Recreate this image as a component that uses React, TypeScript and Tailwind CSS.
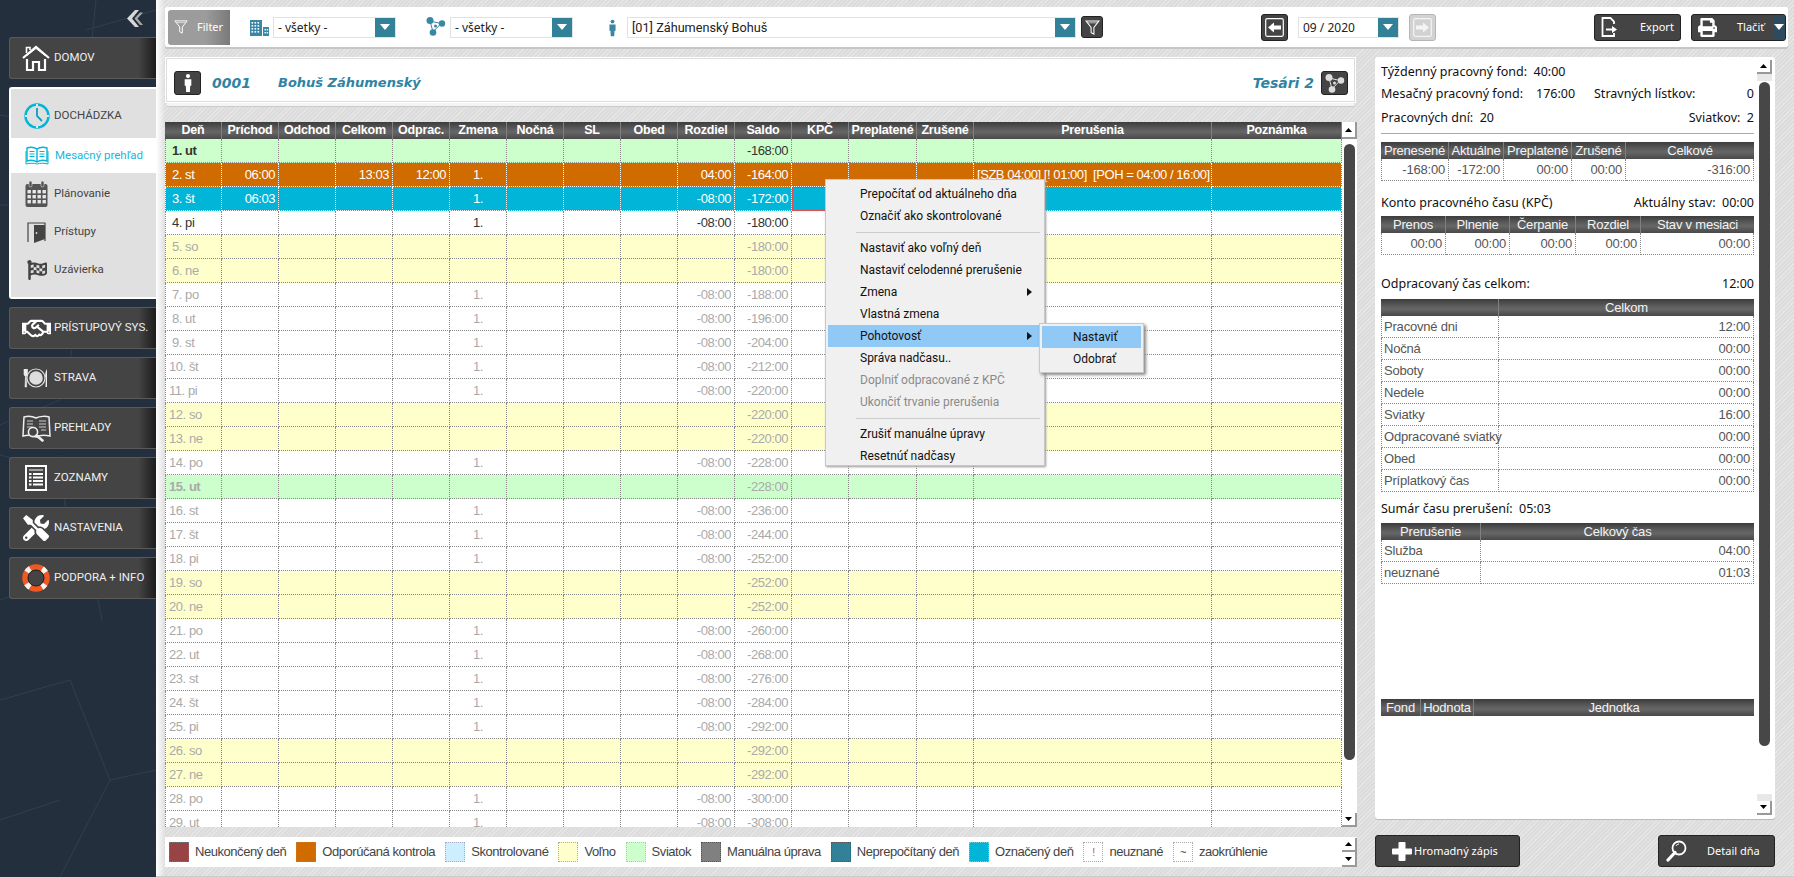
import React from "react";
import { FaRegHandshake, FaTools, FaFlagCheckered, FaPrint } from "react-icons/fa";

const ui = "font-['Noto_Sans',sans-serif]";
const rb = "font-['Roboto',sans-serif]";
const ar = "font-['Liberation_Sans',Arial,sans-serif]";
const headBg = "bg-[linear-gradient(#3c3c3c,#5f5f5f_45%,#666_60%,#484848)]";
const hatch = "bg-[repeating-linear-gradient(135deg,#e6e6e6_0px,#e6e6e6_1px,#dcdcdc_1px,#dcdcdc_3px)]";
const darkBtn = "bg-[#444] border border-[#222] rounded-[3px]";

/* ---------- icons ---------- */
const HomeIcon = () => (
  <svg width="28" height="28" viewBox="0 0 28 28" fill="none" stroke="#fff" strokeWidth="2.2">
    <path d="M1 14 14 3l13 11" />
    <path d="M4.5 9V3.5H8V6" strokeWidth="1.6" />
    <path d="M5 15v11h6v-8h6v8h6V15" />
    <path d="M5 11.5 14 4.5l9 7" strokeWidth="1" />
  </svg>
);
const ClockIcon = () => (
  <svg width="26" height="26" viewBox="0 0 26 26" fill="none" stroke="#00b5d8">
    <circle cx="13" cy="13" r="11.5" strokeWidth="2.4" />
    <path d="M13 5v8l5 5" strokeWidth="1.8" stroke="#0a9fc0" />
    <path d="M13 1v2M13 23v2M1 13h2M23 13h2" strokeWidth="1.6" stroke="#fff" />
  </svg>
);
const BookIcon = () => (
  <svg width="24" height="19" viewBox="0 0 24 19" fill="none" stroke="#00b5d8" strokeWidth="1.4">
    <path d="M12 3C9 1 5 1 2 2v13c3-1 7-1 10 1 3-2 7-2 10-1V2c-3-1-7-1-10 1zM12 3v13" />
    <path d="M1 5v13c4-1 8-1 11 0 3-1 7-1 11 0V5" strokeWidth="1" />
    <path d="M4.5 5.5h5M4.5 8h5M4.5 10.5h5M14.5 5.5h5M14.5 8h5M14.5 10.5h5" strokeWidth="1" />
  </svg>
);
const CalendarIcon = () => (
  <svg width="23" height="26" viewBox="0 0 23 26">
    <rect x="0.5" y="3" width="22" height="23" rx="2" fill="#555" />
    <rect x="4" y="0" width="3" height="6" rx="1.5" fill="#555" stroke="#e0e0e0" strokeWidth=".6" />
    <rect x="16" y="0" width="3" height="6" rx="1.5" fill="#555" stroke="#e0e0e0" strokeWidth=".6" />
    <g fill="#e8e8e8">
      {[9, 14, 19].map((y) => [2.5, 7.5, 12.5, 17.5].map((x) => <rect key={x + "-" + y} x={x} y={y} width="3.4" height="3.4" />))}
    </g>
  </svg>
);
const DoorIcon = () => (
  <svg width="19" height="21" viewBox="0 0 19 21">
    <path d="M1 20V1h17v18" fill="none" stroke="#444" strokeWidth="1.2" />
    <path d="M7 3h11v14L7 21z" fill="#444" />
    <circle cx="9.5" cy="11" r=".9" fill="#e0e0e0" />
  </svg>
);
const PlateIcon = () => (
  <svg width="26" height="20" viewBox="0 0 26 20">
    <circle cx="13" cy="10" r="9" fill="none" stroke="#ddd" strokeWidth="1.2" />
    <circle cx="13" cy="10" r="6.8" fill="#ddd" />
    <path d="M1 1v5c0 1.6 1 2 1.5 2.5L2 19h1.6l-.4-10.500C4 8 4.500 7 4.500 6V1M2.700 1v5" fill="#eee" stroke="#eee" strokeWidth=".6" />
    <path d="M24 1c-1.500 2-2 5-1.800 8l.6.4L22.500 19H24z" fill="#eee" />
  </svg>
);
const ReportIcon = () => (
  <svg width="29" height="27" viewBox="0 0 29 27">
    <path d="M14 3C10 1 5 1 2 2L1 21c4-1 9-1 13 1 4-2 9-2 14-1l-1-19c-3-1-9-1-13 1z" fill="none" stroke="#eee" strokeWidth="1.5" />
    <path d="M5 6h6M5 9h6M5 12h5M17 6h7M17 9h7M17 12h7M19 15h5" stroke="#ccc" strokeWidth="1.2" />
    <circle cx="11" cy="17" r="4.600" fill="#444" stroke="#eee" strokeWidth="1.6" />
    <path d="m14.500 20.500 6 5" stroke="#eee" strokeWidth="2.600" strokeLinecap="round" />
  </svg>
);
const ListIcon = () => (
  <svg width="22" height="26" viewBox="0 0 22 26">
    <rect width="22" height="26" fill="#fff" />
    <rect x="2" y="2" width="18" height="22" fill="#444" />
    <path d="M4 5h14" stroke="#fff" strokeWidth="1" />
    <g fill="#fff">
      {[8, 11.500, 15, 18.500].map((y) => (
        <React.Fragment key={y}>
          <rect x="4" y={y} width="2.500" height="2" />
          <rect x="8" y={y} width="10" height="2" />
        </React.Fragment>
      ))}
    </g>
  </svg>
);
const RingIcon = () => (
  <svg width="28" height="28" viewBox="0 0 28 28" fill="none">
    <circle cx="14" cy="14" r="11" stroke="#f05a22" strokeWidth="5.500" />
    <circle cx="14" cy="14" r="11" stroke="#f4f4f4" strokeWidth="5.500" strokeDasharray="5 12.280" strokeDashoffset="2.500" transform="rotate(45 14 14)" />
    <circle cx="14" cy="14" r="8" stroke="#222" strokeWidth="1" />
  </svg>
);
const Chevrons = () => (
  <svg width="17" height="17" viewBox="0 0 17 17" fill="#d8d8d8">
    <path d="M9 0h4L6 8.500 13 17H9L1 8.500z" />
    <path d="M14 2.500h3L11.500 8.500 17 15h-3L8.500 8.500z" fill="#aaa" />
  </svg>
);
const Funnel = ({ size = 15 }: { size?: number }) => (
  <svg width={size} height={size} viewBox="0 0 16 16" fill="none" stroke="#fff" strokeWidth="1.100">
    <path d="M1 1h14L9.500 8v7L6.500 13.500V8z" />
    <path d="M3 3h10" strokeWidth=".7" />
  </svg>
);
const BuildingIcon = () => (
  <svg width="19" height="16" viewBox="0 0 19 16" fill="#3a87a5">
    <path d="M0 0h12v16H0zM13 7h6v9h-6z" />
    <g fill="#fff">
      {[2, 5, 8, 11].map((y) => [1.500, 4.500, 7.500].map((x) => <rect key={x + "-" + y} x={x} y={y} width="1.600" height="1.600" />))}
      <rect x="14.500" y="9" width="1.400" height="1.400" />
      <rect x="16.700" y="9" width="1.400" height="1.400" />
      <rect x="14.500" y="12" width="1.400" height="1.400" />
      <rect x="16.700" y="12" width="1.400" height="1.400" />
    </g>
  </svg>
);
const NodesIcon = ({ color = "#3a87a5", line = "#3a87a5" }: { color?: string; line?: string }) => (
  <svg width="20" height="19" viewBox="0 0 20 19" fill={color}>
    <path d="M4 4 15 6.500 7 15z" fill="none" stroke={line} strokeWidth="1" />
    <circle cx="4" cy="3.500" r="3.500" />
    <circle cx="16" cy="6.500" r="3.200" />
    <circle cx="7" cy="15.500" r="3.300" />
    <circle cx="9.500" cy="9" r="1.500" />
  </svg>
);
const PersonIcon = ({ color = "#3a87a5", w = 8, h = 19 }: { color?: string; w?: number; h?: number }) => (
  <svg width={w} height={h} viewBox="0 0 8 19" fill={color}>
    <circle cx="4" cy="2.200" r="2.200" />
    <path d="M.5 5.500h7v7L6.300 12.500 6 19H2l-.3-6.500L.5 12.500z" />
  </svg>
);
const Triangle = ({ c = "#fff" }: { c?: string }) => (
  <svg width="10" height="6" viewBox="0 0 10 6" fill={c}>
    <path d="M0 0h10L5 6z" />
  </svg>
);
const ArrowL = ({ c = "#fff" }: { c?: string }) => (
  <svg width="19" height="19" viewBox="0 0 19 19">
    <rect x=".7" y=".7" width="17.600" height="17.600" rx="1.500" fill="none" stroke={c} strokeWidth="1.200" />
    <path d="M3 9.500 9 4.500V7.500H16V11.500H9V14.500z" fill={c} />
  </svg>
);
const ArrowR = ({ c = "#fff" }: { c?: string }) => (
  <svg width="19" height="19" viewBox="0 0 19 19">
    <rect x=".7" y=".7" width="17.600" height="17.600" rx="1.500" fill="none" stroke={c} strokeWidth="1.200" />
    <path d="M16 9.500 10 4.500V7.500H3V11.500H10V14.500z" fill={c} />
  </svg>
);
const ExportIcon = () => (
  <svg width="17" height="20" viewBox="0 0 17 20" fill="none" stroke="#fff" strokeWidth="1.800">
    <path d="M13 7V4.500L9.500 1H1.500v18H13v-3" />
    <path d="M5 11.500h6V9l5 3.500-5 3.500v-2.500H5z" fill="#fff" stroke="none" />
  </svg>
);
const Magnifier = () => (
  <svg width="21" height="22" viewBox="0 0 21 22" fill="none" stroke="#fff">
    <circle cx="13" cy="8" r="6.500" strokeWidth="1.800" />
    <path d="M9 12.500 2 20" strokeWidth="3.200" strokeLinecap="round" />
    <path d="M10 6c.6-1.200 1.500-1.800 3-2" strokeWidth="1" />
  </svg>
);
const PlusIcon = () => (
  <svg width="20" height="19" viewBox="0 0 20 19" fill="#fff">
    <path d="M6.500 1Q6.500 0 7.500 0h5q1 0 1 1v5.500H19q1 0 1 1v4q0 1-1 1h-5.500V18q0 1-1 1h-5q-1 0-1-1v-5.500H1q-1 0-1-1v-4q0-1 1-1h5.500z" />
  </svg>
);
const SmallArrow = ({ dir }: { dir: "up" | "down" }) => (
  <svg width="7" height="4" viewBox="0 0 7 4" fill="#000">
    <path d={dir === "up" ? "M0 4h7L3.500 0z" : "M0 0h7L3.500 4z"} />
  </svg>
);
const ScrollBtn = ({ dir, cls = "" }: { dir: "up" | "down"; cls?: string }) => (
  <div className={`flex items-center justify-center bg-white border-r-2 border-b-2 border-r-[#999] border-b-[#999] w-[15px] ${cls}`}>
    <SmallArrow dir={dir} />
  </div>
);

/* ---------- sidebar ---------- */
const NavBtn = ({ icon, label }: { icon: React.ReactNode; label: string }) => (
  <div className={`relative h-[42px] flex items-center rounded-l-[3px] border border-r-0 border-[#5a5a5a] bg-[linear-gradient(90deg,#444_0%,#444_88%,#1c1c1c_100%)] ${rb}`}>
    <div className="flex justify-center items-center w-[44px] pl-[8px] shrink-0">{icon}</div>
    <span className="text-[11.500px] text-[#efefef] whitespace-nowrap">{label}</span>
  </div>
);
const SubRow = ({ icon, label, active, h }: { icon: React.ReactNode; label: string; active?: boolean; h: string }) => (
  <div className={`flex items-center ${h} ${active ? "bg-white" : ""} ${rb}`}>
    <div className="w-[43px] pl-[8px] shrink-0 flex justify-center items-center">{icon}</div>
    <span className={`text-[11.500px] whitespace-nowrap ${active ? "text-[#1ab5dc] pl-[1px]" : "text-[#444]"}`}>{label}</span>
  </div>
);

const Sidebar = () => (
  <aside className="relative w-[156px] shrink-0 h-full bg-[#232f3d] overflow-hidden pl-[9px]">
    <svg className="absolute inset-0" width="156" height="877" fill="none" stroke="#2e4050" strokeWidth="1">
      <path d="M96 0 88 78M0 115 30 120 60 230M0 205H40L66 260M0 425 60 400 72 350M0 455 60 470 66 510 58 455M0 600 60 580 90 560 102 620M86 30 156 10M0 700 70 680 110 780 60 877M110 780 156 770M0 820 60 800" />
    </svg>
    <div className="relative h-[37px] flex justify-end pr-[13px] pt-[10px]"><Chevrons /></div>
    <div className="relative flex flex-col gap-[8px]">
      <NavBtn icon={<HomeIcon />} label="DOMOV" />
      <div className="h-[212px] rounded-l-[3px] border-2 border-r-0 border-white bg-[#e0e0e0] pt-[9px]">
        <SubRow h="h-[36px] mb-[4px]" icon={<ClockIcon />} label="DOCHÁDZKA" />
        <SubRow h="h-[35px]" active icon={<BookIcon />} label="Mesačný prehľad" />
        <SubRow h="h-[41px]" icon={<CalendarIcon />} label="Plánovanie" />
        <SubRow h="h-[36px]" icon={<DoorIcon />} label="Prístupy" />
        <SubRow h="h-[39px]" icon={<FaFlagCheckered size={20} color="#444" />} label="Uzávierka" />
      </div>
      <NavBtn icon={<FaRegHandshake size={29} color="#fff" />} label="PRÍSTUPOVÝ SYS." />
      <NavBtn icon={<PlateIcon />} label="STRAVA" />
      <NavBtn icon={<ReportIcon />} label="PREHĽADY" />
      <NavBtn icon={<ListIcon />} label="ZOZNAMY" />
      <NavBtn icon={<FaTools size={26} color="#fff" />} label="NASTAVENIA" />
      <NavBtn icon={<RingIcon />} label="PODPORA + INFO" />
    </div>
  </aside>
);

/* ---------- toolbar ---------- */
const Select = ({ text, cls, txt = "" }: { text: string; cls: string; txt?: string }) => (
  <div className={`h-[21px] border border-[#e2e2e2] bg-white flex items-stretch justify-between ${cls}`}>
    <span className={`pl-[4px] leading-[19px] text-[#222] whitespace-nowrap ${txt || `${ui} text-[12px]`}`}>{text}</span>
    <span className="w-[20px] bg-[#338099] flex items-center justify-center"><Triangle /></span>
  </div>
);
const Toolbar = () => (
  <div className={`h-[40px] w-[1623px] bg-white rounded-[2px] flex items-center shadow-[0_2px_0_#c4c6c8] ${ui}`}>
    <div className="ml-[3px] w-[62px] h-[35px] rounded-l-[3px] bg-[linear-gradient(90deg,#9c9c9c_60%,#7a7a7a)] flex items-center pl-[6px] gap-[9px]">
      <Funnel size={14} />
      <span className="text-[11px] text-white">Filter</span>
    </div>
    <div className="ml-[20px] mt-[1px]"><BuildingIcon /></div>
    <Select text="- všetky -" cls="ml-[4px] w-[123px]" />
    <div className="ml-[30px] -mt-[2px]"><NodesIcon /></div>
    <Select text="- všetky -" cls="ml-[4px] w-[123px]" />
    <div className="ml-[36px] mt-[1px]"><PersonIcon w={7} h={18} /></div>
    <Select text="[01] Záhumenský Bohuš" cls="ml-[11px] w-[449px]" txt={`${rb} text-[12.700px]`} />
    <div className={`ml-[5px] w-[22px] h-[22px] flex items-center justify-center ${darkBtn}`}><Funnel size={15} /></div>
    <div className={`ml-[158px] w-[27px] h-[27px] flex items-center justify-center ${darkBtn}`}><ArrowL /></div>
    <Select text="09 / 2020" cls="ml-[10px] w-[101px]" />
    <div className="ml-[10px] w-[27px] h-[27px] flex items-center justify-center bg-[#d2d2d2] border border-[#b5b5b5] rounded-[3px]"><ArrowR c="#f4f4f4" /></div>
    <div className={`ml-[158px] w-[87px] h-[27px] flex items-center pl-[6px] ${darkBtn}`}>
      <ExportIcon />
      <span className="ml-[22px] text-[11px] text-white">Export</span>
    </div>
    <div className={`ml-[10px] w-[95px] h-[27px] flex items-center pl-[6px] overflow-hidden ${darkBtn}`}>
      <FaPrint size={19} color="#fff" />
      <span className="ml-[20px] text-[11px] text-white">Tlačiť</span>
      <span className="ml-auto w-[12px] h-full bg-[#2e4a5e] flex items-center justify-center"><Triangle /></span>
    </div>
  </div>
);

/* ---------- grid ---------- */
type Row = { d: string; k: "h" | "w" | "y" | "o" | "c"; past?: boolean; a?: string; c?: string; w?: string; z?: boolean; r?: string; s: string; p?: string };
const rows: Row[] = [
  { d: "1. ut", k: "h", past: true, s: "-168:00" },
  { d: "2. st", k: "o", past: true, a: "06:00", c: "13:03", w: "12:00", z: true, r: "04:00", s: "-164:00", p: "[SZB 04:00] [! 01:00]  [POH = 04:00 / 16:00]" },
  { d: "3. št", k: "c", past: true, a: "06:03", z: true, r: "-08:00", s: "-172:00" },
  { d: "4. pi", k: "w", past: true, z: true, r: "-08:00", s: "-180:00" },
  { d: "5. so", k: "y", s: "-180:00" },
  { d: "6. ne", k: "y", s: "-180:00" },
  { d: "7. po", k: "w", z: true, r: "-08:00", s: "-188:00" },
  { d: "8. ut", k: "w", z: true, r: "-08:00", s: "-196:00" },
  { d: "9. st", k: "w", z: true, r: "-08:00", s: "-204:00" },
  { d: "10. št", k: "w", z: true, r: "-08:00", s: "-212:00" },
  { d: "11. pi", k: "w", z: true, r: "-08:00", s: "-220:00" },
  { d: "12. so", k: "y", s: "-220:00" },
  { d: "13. ne", k: "y", s: "-220:00" },
  { d: "14. po", k: "w", z: true, r: "-08:00", s: "-228:00" },
  { d: "15. ut", k: "h", s: "-228:00" },
  { d: "16. st", k: "w", z: true, r: "-08:00", s: "-236:00" },
  { d: "17. št", k: "w", z: true, r: "-08:00", s: "-244:00" },
  { d: "18. pi", k: "w", z: true, r: "-08:00", s: "-252:00" },
  { d: "19. so", k: "y", s: "-252:00" },
  { d: "20. ne", k: "y", s: "-252:00" },
  { d: "21. po", k: "w", z: true, r: "-08:00", s: "-260:00" },
  { d: "22. ut", k: "w", z: true, r: "-08:00", s: "-268:00" },
  { d: "23. st", k: "w", z: true, r: "-08:00", s: "-276:00" },
  { d: "24. št", k: "w", z: true, r: "-08:00", s: "-284:00" },
  { d: "25. pi", k: "w", z: true, r: "-08:00", s: "-292:00" },
  { d: "26. so", k: "y", s: "-292:00" },
  { d: "27. ne", k: "y", s: "-292:00" },
  { d: "28. po", k: "w", z: true, r: "-08:00", s: "-300:00" },
  { d: "29. ut", k: "w", z: true, r: "-08:00", s: "-308:00" },
];
const heads = ["Deň", "Príchod", "Odchod", "Celkom", "Odprac.", "Zmena", "Nočná", "SL", "Obed", "Rozdiel", "Saldo", "KPČ", "Preplatené", "Zrušené", "Prerušenia", "Poznámka"];
const headCols = ["w-[57px]", "w-[57px]", "w-[57px]", "w-[57px]", "w-[57px]", "w-[57px]", "w-[57px]", "w-[57px]", "w-[57px]", "w-[57px]", "w-[57px]", "w-[57px]", "w-[68px]", "w-[57px]", "w-[238px]", "w-[130px]"];

const rowBg: Record<Row["k"], string> = {
  h: "bg-[#ccffcc]",
  w: "bg-white",
  y: "bg-[#ffffcc]",
  o: "bg-[#d06b00]",
  c: "bg-[#00b5d8]",
};

const GridRow = ({ r }: { r: Row }) => {
  const light = r.k === "o" || r.k === "c";
  const color = light ? "text-white" : r.past ? "text-[#333]" : "text-[#aaa]";
  const bd = light ? "border-white" : "border-[#888]";
  const td = `border-r border-b border-dotted ${bd} p-0 h-[24px] whitespace-nowrap overflow-hidden`;
  const rt = `${td} text-right pr-[3px]`;
  const two = r.d.length > 5;
  return (
    <tr className={`${rowBg[r.k]} ${color}`}>
      <td className={`${td} border-l ${two ? "pl-[3px]" : "pl-[6px]"} ${r.k === "h" ? "font-bold" : ""}`}>{r.d}</td>
      <td className={rt}>{r.a}</td>
      <td className={rt}></td>
      <td className={rt}>{r.c}</td>
      <td className={rt}>{r.w}</td>
      <td className={`${td} text-center`}>{r.z ? "1." : ""}</td>
      <td className={td}></td>
      <td className={td}></td>
      <td className={td}></td>
      <td className={rt}>{r.r}</td>
      <td className={rt}>{r.s}</td>
      <td className={`${td} ${r.k === "c" ? "outline-1 outline-dotted outline-[#e04040] -outline-offset-1" : ""}`}></td>
      <td className={td}></td>
      <td className={td}></td>
      <td className={`${td} pl-[3px] whitespace-pre`}>{r.p}</td>
      <td className={td}></td>
    </tr>
  );
};

const MainGrid = () => (
  <div className="mt-[20px] h-[705px] flex">
    <div className="w-[1177px] overflow-hidden">
      <table className={`w-[1177px] table-fixed border-separate border-spacing-0 text-[13px] tracking-[-0.45px] ${ar}`}>
        <colgroup>{headCols.map((c, i) => <col key={i} className={c} />)}</colgroup>
        <thead>
          <tr className={headBg}>
            {heads.map((h) => (
              <th key={h} className="h-[17px] p-0 text-[12.500px] tracking-[-0.2px] leading-[17px] font-bold text-white border-r border-[#808080] whitespace-nowrap">{h}</th>
            ))}
          </tr>
        </thead>
        <tbody>{rows.map((r) => <GridRow key={r.d} r={r} />)}</tbody>
      </table>
    </div>
    <div className="w-[15px] bg-white flex flex-col">
      <ScrollBtn dir="up" cls="h-[17px]" />
      <div className="mt-[5px] ml-[2px] w-[11px] h-[616px] rounded-[6px] bg-[#474747]" />
      <ScrollBtn dir="down" cls="h-[14px] mt-auto" />
    </div>
  </div>
);

/* ---------- legend ---------- */
const legend: [string, string][] = [
  ["bg-[#984444] border-[#777]", "Neukončený deň"],
  ["bg-[#d06b00] border-[#888]", "Odporúčaná kontrola"],
  ["bg-[#cceeff] border-[#aac]", "Skontrolované"],
  ["bg-[#ffffcc] border-[#aaa]", "Voľno"],
  ["bg-[#ccffcc] border-[#aca]", "Sviatok"],
  ["bg-[#808080] border-[#555]", "Manuálna úprava"],
  ["bg-[#338099] border-[#555]", "Neprepočítaný deň"],
  ["bg-[#00b5d8] border-[#7cc]", "Označený deň"],
];
const Legend = () => (
  <div className={`mt-[10px] h-[30px] w-[1192px] bg-white flex items-center pl-[4px] text-[13px] tracking-[-0.45px] text-[#444] ${ar}`}>
    {legend.map(([c, t]) => (
      <React.Fragment key={t}>
        <span className={`w-[20px] h-[20px] border border-dotted shrink-0 ${c}`} />
        <span className="ml-[6px] mr-[10px] whitespace-nowrap">{t}</span>
      </React.Fragment>
    ))}
    <span className="w-[20px] h-[20px] border border-dotted border-[#aaa] text-center text-[#d06b00] text-[11px] leading-[18px] shrink-0">!</span>
    <span className="ml-[6px] mr-[10px]">neuznané</span>
    <span className="w-[20px] h-[20px] border border-dotted border-[#aaa] text-center text-[#333] text-[11px] leading-[18px] shrink-0">~</span>
    <span className="ml-[6px]">zaokrúhlenie</span>
    <div className="ml-auto flex flex-col h-[30px] pt-[1px]">
      <ScrollBtn dir="up" cls="h-[14px]" />
      <ScrollBtn dir="down" cls="h-[15px]" />
    </div>
  </div>
);

/* ---------- right panel ---------- */
const MiniTable = ({ cols, head, body, aligns, cls = "" }: { cols: string[]; head: string[]; body: string[][]; aligns?: string[]; cls?: string }) => (
  <table className={`w-[373px] table-fixed border-separate border-spacing-0 text-[13px] tracking-[-0.2px] ${ar} ${cls}`}>
    <colgroup>{cols.map((c, i) => <col key={i} className={c} />)}</colgroup>
    <thead>
      <tr className={headBg}>
        {head.map((h, i) => (
          <th key={i} className="h-[17px] p-0 font-normal text-[13px] leading-[17px] text-[#f4f4f4] border-r border-[#808080] last:border-r-0 whitespace-nowrap">{h}</th>
        ))}
      </tr>
    </thead>
    <tbody>
      {body.map((r, i) => (
        <tr key={i}>
          {r.map((v, j) => (
            <td key={j} className={`h-[22px] p-0 border-r border-b first:border-l border-dotted border-[#888] text-[#555] whitespace-nowrap ${aligns && aligns[j] === "l" ? "text-left pl-[2px]" : "text-right pr-[3px]"}`}>{v}</td>
          ))}
        </tr>
      ))}
    </tbody>
  </table>
);
const Line = ({ l, r, cls = "" }: { l: React.ReactNode; r?: React.ReactNode; cls?: string }) => (
  <div className={`h-[22px] flex items-center justify-between text-[12.500px] text-[#111] whitespace-pre ${cls}`}>
    <span>{l}</span>
    {r !== undefined && <span>{r}</span>}
  </div>
);
const RightPanel = () => (
  <div className={`relative w-[400px] h-[762px] bg-white rounded-[3px] shadow-[0_1px_0_#bbb] flex ${ui}`}>
    <div className="w-[373px] ml-[6px] pt-[4px] shrink-0">
      <Line l={"Týždenný pracovný fond:  40:00"} />
      <div className="h-[22px] flex items-center text-[12.500px] text-[#111] whitespace-pre">
        <span className="w-[213px]">Mesačný pracovný fond:    176:00</span>
        <span>Stravných lístkov:</span>
        <span className="ml-auto">0</span>
      </div>
      <Line cls="mt-[2px]" l="Pracovných dní:  20" r="Sviatkov:  2" />
      <div className="mt-[4px] h-px bg-[#aaa]" />
      <MiniTable cls="mt-[8px]" cols={["w-[68px]", "w-[55px]", "w-[68px]", "w-[54px]", "w-[128px]"]} head={["Prenesené", "Aktuálne", "Preplatené", "Zrušené", "Celkové"]} body={[["-168:00", "-172:00", "00:00", "00:00", "-316:00"]]} />
      <Line cls="mt-[11px]" l="Konto pracovného času (KPČ)" r="Aktuálny stav:  00:00" />
      <MiniTable cls="mt-[2px]" cols={["w-[65px]", "w-[64px]", "w-[66px]", "w-[65px]", "w-[113px]"]} head={["Prenos", "Plnenie", "Čerpanie", "Rozdiel", "Stav v mesiaci"]} body={[["00:00", "00:00", "00:00", "00:00", "00:00"]]} />
      <Line cls="mt-[18px]" l="Odpracovaný čas celkom:" r="12:00" />
      <MiniTable cls="mt-[4px]" aligns={["l", "r"]} cols={["w-[118px]", "w-[255px]"]} head={["", "Celkom"]} body={[["Pracovné dni", "12:00"], ["Nočná", "00:00"], ["Soboty", "00:00"], ["Nedele", "00:00"], ["Sviatky", "16:00"], ["Odpracované sviatky", "00:00"], ["Obed", "00:00"], ["Príplatkový čas", "00:00"]]} />
      <Line cls="mt-[6px]" l="Sumár času prerušení:  05:03" />
      <MiniTable cls="mt-[3px]" aligns={["l", "r"]} cols={["w-[100px]", "w-[273px]"]} head={["Prerušenie", "Celkový čas"]} body={[["Služba", "04:00"], ["neuznané", "01:03"]]} />
      <MiniTable cls="mt-[115px]" cols={["w-[40px]", "w-[53px]", "w-[280px]"]} head={["Fond", "Hodnota", "Jednotka"]} body={[]} />
    </div>
    <div className="w-[15px] ml-[3px] pt-[3px] flex flex-col items-stretch pb-[4px]">
      <ScrollBtn dir="up" cls="h-[14px]" />
      <div className="h-[7px] bg-[#e8e8e8]" />
      <div className="mt-[1px] ml-[2px] w-[11px] h-[664px] rounded-[6px] bg-[#474747]" />
      <div className="mt-auto h-[7px] bg-[#e8e8e8]" />
      <ScrollBtn dir="down" cls="h-[14px]" />
    </div>
  </div>
);

/* ---------- context menu ---------- */
const Item = ({ t, dis, hi, sub }: { t: string; dis?: boolean; hi?: boolean; sub?: boolean }) => (
  <div className={`h-[22px] mx-[2px] pl-[32px] pr-[10px] flex items-center justify-between whitespace-nowrap ${hi ? "bg-[#90c8f6]" : ""} ${dis ? "text-[#8a8a8a]" : "text-[#111]"}`}>
    <span>{t}</span>
    {sub && <svg width="5" height="8" viewBox="0 0 5 8" fill="#111"><path d="M0 0l5 4-5 4z" /></svg>}
  </div>
);
const Sep = () => <div className="h-[1px] mr-[4px] ml-[30px] my-[4.500px] bg-[#ccc]" />;
const ContextMenu = () => (
  <div className={`absolute left-[825px] top-[179px] w-[220px] h-[287px] bg-[#f0f0f0] border border-[#c8c8c8] shadow-[1px_1px_2px_#999] text-[12px] py-[3px] ${rb}`}>
    <Item t="Prepočítať od aktuálneho dňa" />
    <Item t="Označiť ako skontrolované" />
    <Sep />
    <Item t="Nastaviť ako voľný deň" />
    <Item t="Nastaviť celodenné prerušenie" />
    <Item t="Zmena" sub />
    <Item t="Vlastná zmena" />
    <Item t="Pohotovosť" hi sub />
    <Item t="Správa nadčasu.." />
    <Item t="Doplniť odpracované z KPČ" dis />
    <Item t="Ukončiť trvanie prerušenia" dis />
    <Sep />
    <Item t="Zrušiť manuálne úpravy" />
    <Item t="Resetnúť nadčasy" />
    <div className="absolute left-[213px] top-[143px] w-[105px] h-[50px] bg-[#f0f0f0] border border-[#c8c8c8] shadow-[2px_2px_3px_#888] py-[2px]">
      <div className="h-[22px] mx-[2px] pl-[31px] flex items-center bg-[#90c8f6] text-[#111]">Nastaviť</div>
      <div className="h-[22px] mx-[2px] pl-[31px] flex items-center text-[#111]">Odobrať</div>
    </div>
  </div>
);

/* ---------- page ---------- */
const ActionBtn = ({ cls, children }: { cls: string; children: React.ReactNode }) => (
  <div className={`h-[32px] flex items-center ${darkBtn} ${cls}`}>{children}</div>
);
const titleCls = "font-['DejaVu_Sans',sans-serif] font-bold italic text-[#2f84a4]";

export default function App() {
  return (
    <div className="relative w-[1794px] h-[877px] overflow-hidden flex">
      <Sidebar />
      <main className={`relative flex-1 h-full pl-[9px] pt-[7px] ${hatch} border-b border-[#ccc]`}>
        <div className="absolute left-0 top-0 bottom-0 w-[9px] bg-[linear-gradient(90deg,#fff,transparent)]" />
        <div className="relative">
          <Toolbar />
          <div className="flex mt-[10px]">
            <div className="w-[1192px] shrink-0">
              <div className="ml-[1px] w-[1189px] h-[44px] mt-[1px] bg-white border border-[#ddd] outline outline-white flex items-center pl-[7px] pr-[6px] pt-[6px] shadow-[0_5px_0_-1px_#f4f4f4,0_6px_0_-1px_#c8cbd0]">
                <span className={`w-[27px] h-[24px] flex items-center justify-center ${darkBtn}`}><PersonIcon color="#fff" w={8} h={18} /></span>
                <span className={`ml-[11px] text-[14px] ${titleCls}`}>0001</span>
                <span className={`ml-[27px] text-[13px] ${titleCls}`}>Bohuš Záhumenský</span>
                <span className={`ml-auto text-[14px] ${titleCls}`}>Tesári 2</span>
                <span className={`ml-[7px] w-[27px] h-[24px] flex items-center justify-center ${darkBtn}`}><NodesIcon color="#ddd" line="#ddd" /></span>
              </div>
              <MainGrid />
              <Legend />
            </div>
            <div className="ml-[18px] w-[400px]">
              <RightPanel />
              <div className={`mt-[16px] flex justify-between text-[11px] text-white ${ui}`}>
                <ActionBtn cls="w-[145px] pl-[16px]">
                  <PlusIcon />
                  <span className="ml-[2px]">Hromadný zápis</span>
                </ActionBtn>
                <ActionBtn cls="w-[117px] pl-[7px]">
                  <Magnifier />
                  <span className="ml-[20px]">Detail dňa</span>
                </ActionBtn>
              </div>
            </div>
          </div>
        </div>
        <div className="absolute -left-[156px] top-0"><ContextMenu /></div>
      </main>
    </div>
  );
}
